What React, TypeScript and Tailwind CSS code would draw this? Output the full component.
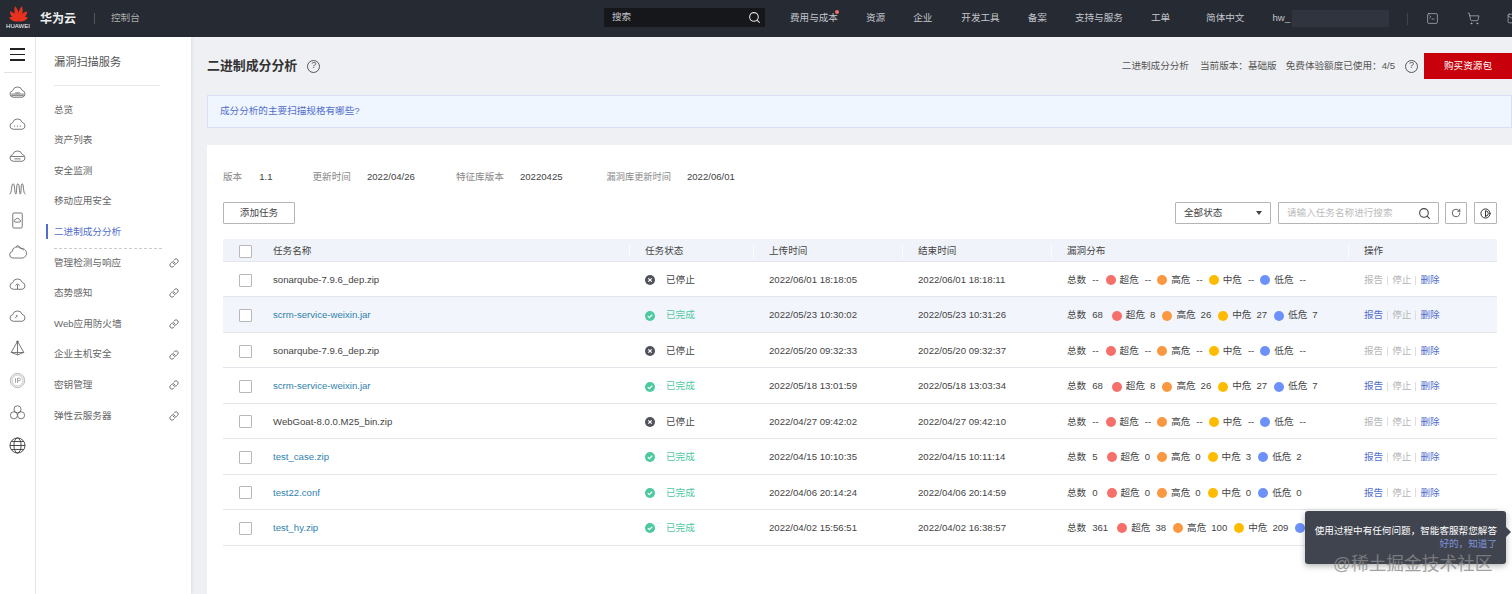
import { ReactNode } from "react";
import { Contrast, Link, Mail, RotateCw, Search, ShoppingCart, SquareTerminal } from "lucide-react";

interface Task {
  name: string;
  done: boolean;
  start: string;
  end: string;
  counts: string[];
}

const tasks: Task[] = [
  { name: "sonarqube-7.9.6_dep.zip", done: false, start: "2022/06/01 18:18:05", end: "2022/06/01 18:18:11", counts: ["--", "--", "--", "--", "--"] },
  { name: "scrm-service-weixin.jar", done: true, start: "2022/05/23 10:30:02", end: "2022/05/23 10:31:26", counts: ["68", "8", "26", "27", "7"] },
  { name: "sonarqube-7.9.6_dep.zip", done: false, start: "2022/05/20 09:32:33", end: "2022/05/20 09:32:37", counts: ["--", "--", "--", "--", "--"] },
  { name: "scrm-service-weixin.jar", done: true, start: "2022/05/18 13:01:59", end: "2022/05/18 13:03:34", counts: ["68", "8", "26", "27", "7"] },
  { name: "WebGoat-8.0.0.M25_bin.zip", done: false, start: "2022/04/27 09:42:02", end: "2022/04/27 09:42:10", counts: ["--", "--", "--", "--", "--"] },
  { name: "test_case.zip", done: true, start: "2022/04/15 10:10:35", end: "2022/04/15 10:11:14", counts: ["5", "0", "0", "3", "2"] },
  { name: "test22.conf", done: true, start: "2022/04/06 20:14:24", end: "2022/04/06 20:14:59", counts: ["0", "0", "0", "0", "0"] },
  { name: "test_hy.zip", done: true, start: "2022/04/02 15:56:51", end: "2022/04/02 16:38:57", counts: ["361", "38", "100", "209", ""] },
];

const levels = [
  { label: "超危", dot: "bg-[#f66f6a]" },
  { label: "高危", dot: "bg-[#fa9841]" },
  { label: "中危", dot: "bg-[#ffbb00]" },
  { label: "低危", dot: "bg-[#6c92fa]" },
];

const gridCols = "grid grid-cols-[50px_372px_124px_149px_149px_297px_133px] items-center pt-[2px]";
const headSep = "relative before:absolute before:-left-[16px] before:top-0 before:w-px before:h-[14px] before:bg-white/70";
const cloud = "M6.5 18a4.2 4.2 0 0 1-.6-8.3A6.3 6.3 0 0 1 18 9.4 4.4 4.4 0 0 1 18 18z";

function RailIcon({ children }: { children: ReactNode }) {
  return (
    <svg viewBox="0 0 24 24" fill="none" stroke="#666" strokeWidth="1.1" className="w-[19px] h-[19px]">
      {children}
    </svg>
  );
}

const railIcons: ReactNode[] = [
  <><path d={cloud} /><path d="M4 14h16M4 16h16M9 12.5h6" /></>,
  <><path d={cloud} /><path d="M8 14h1M11.5 14h1M15 14h1" strokeWidth="1.4" /></>,
  <><path d={cloud} /><path d="M4 12h16M8 15h8" /></>,
  <path d="M2 19c3 0 2-13 4.5-13S8 19 10 19c1.5 0 0-13 2.5-13S14 19 15.5 19 16 6 18 6s1 13 4 13" />,
  <><rect x="6" y="2.5" width="12" height="19" rx="1.5" /><path d="M9 14a1.5 1.5 0 0 1 .5-3 2.6 2.6 0 0 1 5 .2 1.4 1.4 0 0 1 0 2.8z" /></>,
  <><path d="M6 19a4.2 4.2 0 0 1-.6-8.3A6 6 0 0 1 16 7a4.7 4.7 0 0 1 2.5 12z" /><path d="M10 5l2-2 8 6" /></>,
  <><path d={cloud} /><path d="M12 18v-6M9.5 13.5 12 11l2.5 2.5" /></>,
  <><path d={cloud} /><path d="M9 14l3-3M12 11h-2" /></>,
  <><path d="M12 3 4 17l8 3 8-3zM12 3v17M4 17h16" /><circle cx="12" cy="3.5" r="1" fill="#555" /></>,
  <><circle cx="12" cy="12" r="9" stroke="#aaa" /><circle cx="12" cy="12" r="7" stroke="#bbb" /><path d="M9.5 9v6M12 15V9h2a1.5 1.5 0 0 1 0 3.5h-2" stroke="#999" /></>,
  <><circle cx="12" cy="8" r="4.5" /><circle cx="7.5" cy="15.5" r="4.5" /><circle cx="16.5" cy="15.5" r="4.5" /></>,
  <><circle cx="12" cy="12" r="9.5" stroke="#333" /><ellipse cx="12" cy="12" rx="4.5" ry="9.5" stroke="#333" /><path d="M2.5 12h19M4 7h16M4 17h16" stroke="#333" /></>,
];

const sideItems = ["总览", "资产列表", "安全监测", "移动应用安全", "二进制成分分析", "管理检测与响应", "态势感知", "Web应用防火墙", "企业主机安全", "密钥管理", "弹性云服务器"];

const petals = [
  { angle: -68, d: "M12 18C9.5 15 9 10 12 6.5 15 10 14.5 15 12 18z" },
  { angle: 68, d: "M12 18C9.5 15 9 10 12 6.5 15 10 14.5 15 12 18z" },
  { angle: -41, d: "M12 18C8.8 13 8.8 7 12 3 15.2 7 15.2 13 12 18z" },
  { angle: 41, d: "M12 18C8.8 13 8.8 7 12 3 15.2 7 15.2 13 12 18z" },
  { angle: -13, d: "M12 18C9 12 9 5 12 0.5 15 5 15 12 12 18z" },
  { angle: 13, d: "M12 18C9 12 9 5 12 0.5 15 5 15 12 12 18z" },
];

function HuaweiLogo() {
  return (
    <div className="w-[22px] ml-[7px] -mt-[4px] flex flex-col items-center">
      <svg viewBox="0 0 24 18.5" className="w-[21px] h-[17px]" fill="#e8321f">
        {petals.map((petal) => (
          <path key={petal.angle} d={petal.d} transform={`rotate(${petal.angle} 12 18)`} />
        ))}
      </svg>
      <span className="text-[6px] leading-[6px] text-white mt-[1px]">HUAWEI</span>
    </div>
  );
}

function StatusIcon({ done }: { done: boolean }) {
  return (
    <svg viewBox="0 0 10 10" className="w-[10px] h-[10px] shrink-0">
      <circle cx="5" cy="5" r="5" fill={done ? "#4dc9a0" : "#50535c"} />
      {done ? (
        <path d="M2.8 5.1 4.4 6.7 7.3 3.7" stroke="#fff" strokeWidth="1.2" fill="none" />
      ) : (
        <path d="M3.3 3.3 6.7 6.7M6.7 3.3 3.3 6.7" stroke="#fff" strokeWidth="1.2" fill="none" />
      )}
    </svg>
  );
}

function Checkbox() {
  return <div className="w-[13px] h-[13px] ml-[16px] border border-[#b8b8b8] rounded-[1px] bg-white" />;
}

// the last row runs under the tip, so its 低危 text and links are not drawn
function TaskRow({ task, highlighted, covered }: { task: Task; highlighted: boolean; covered: boolean }) {
  const empty = task.counts[0] === "--";
  return (
    <div className={`${gridCols} h-[35.45px] border-b border-[#e3e5ea] ${highlighted ? "bg-[#f2f5fb]" : "bg-white"} text-[#444]`}>
      <Checkbox />
      <div className={task.done ? "text-[#2f82b0]" : "text-[#444]"}>{task.name}</div>
      <div className="flex items-center gap-[11px]">
        <StatusIcon done={task.done} />
        <span className={task.done ? "text-[#4dc9a0]" : "text-[#444]"}>{task.done ? "已完成" : "已停止"}</span>
      </div>
      <div>{task.start}</div>
      <div>{task.end}</div>
      <div className="flex items-center whitespace-nowrap">
        <span>总数</span>
        <span className="ml-[6px]">{task.counts[0]}</span>
        {levels.map((level, i) => {
          const gap = empty ? (i === 0 ? "ml-[7px]" : "ml-[6px]") : i === 0 ? "ml-[9px]" : "ml-[7px]";
          return (
            <div key={level.label} className={`flex items-center ${gap}`}>
              <span className={`w-[10px] h-[10px] rounded-full ${level.dot}`} />
              {!(covered && i === 3) && <span className="ml-[4px]">{level.label}</span>}
              {!(covered && i === 3) && <span className={empty ? "ml-[6px]" : "ml-[5px]"}>{task.counts[i + 1]}</span>}
            </div>
          );
        })}
      </div>
      {!covered && (
        <div className="flex items-center">
          <span className={task.done ? "text-[#526ecc]" : "text-[#b5b5b5]"}>报告</span>
          <span className="mx-[4px] w-px h-[9px] bg-[#ddd]" />
          <span className="text-[#b5b5b5]">停止</span>
          <span className="mx-[4px] w-px h-[9px] bg-[#ddd]" />
          <span className="text-[#526ecc]">删除</span>
        </div>
      )}
    </div>
  );
}

export default function App() {
  return (
    <div className="relative h-screen overflow-hidden flex flex-col bg-[#eff0f3] text-[9.6px] [font-family:'Liberation_Sans','Noto_Sans_CJK_SC',sans-serif]">
      {/* Top bar */}
      <header className="h-[37px] shrink-0 bg-[#262a33] flex items-center text-[#c4c6cc]">
        <div className="w-[604px] shrink-0 flex items-center">
          <HuaweiLogo />
          <span className="ml-[11px] text-[12px] font-bold text-[#eee]">华为云</span>
          <span className="ml-[18px] w-px h-[11px] bg-[#555]" />
          <span className="ml-[16px] text-[#aaa]">控制台</span>
        </div>
        <div className="w-[161px] h-[19px] -mt-[3px] bg-[#16171b] rounded-[1px] flex items-center justify-between pl-[8px] pr-[4px] shrink-0">
          <span>搜索</span>
          <Search size={13} className="text-[#ddd]" />
        </div>
        <nav className="ml-[25px] flex items-center gap-[28px] shrink-0 -mt-[1px] whitespace-nowrap">
          <span className="relative">
            费用与成本
            <span className="absolute -right-[1px] top-[-1px] w-[4px] h-[4px] rounded-full bg-[#f66f6a]" />
          </span>
          <span>资源</span>
          <span>企业</span>
          <span className="ml-[1px]">开发工具</span>
          <span>备案</span>
          <span>支持与服务</span>
          <span>工单</span>
          <span className="ml-[8px]">简体中文</span>
          <span className="flex items-center">
            hw_
            <span className="ml-[2px] w-[97px] h-[17px] bg-[#30343e] rounded-[1px]" />
          </span>
        </nav>
        <span className="ml-[18px] w-px h-[12px] bg-[#444] shrink-0" />
        <SquareTerminal size={13} strokeWidth={1.2} className="ml-[18px] shrink-0" />
        <ShoppingCart size={13} strokeWidth={1.2} className="ml-[28px] shrink-0" />
        <Mail size={13} strokeWidth={1.2} className="ml-[27px] shrink-0" />
      </header>

      <div className="flex-1 flex min-h-0">
        {/* Icon rail */}
        <aside className="w-[36px] shrink-0 bg-white border-r border-[#e8e9ec] flex flex-col items-center">
          <div className="mt-[11px] w-[15px] flex flex-col gap-[4px]">
            <span className="h-[1.5px] bg-[#222]" />
            <span className="h-[1.5px] bg-[#222]" />
            <span className="h-[1.5px] bg-[#222]" />
          </div>
          <div className="mt-[11px] w-[28px] h-px bg-[#e2e2e2]" />
          <div className="mt-[10px] flex flex-col gap-[13.1px]">
            {railIcons.map((icon, i) => (
              <RailIcon key={i}>{icon}</RailIcon>
            ))}
          </div>
        </aside>

        {/* Service menu */}
        <aside className="w-[155px] shrink-0 bg-white pl-[18px] shadow-[1px_0_3px_rgba(0,0,0,0.08)]">
          <div className="mt-[18px] text-[11.2px] leading-[14px] text-[#555]">漏洞扫描服务</div>
          <div className="mt-[16px] w-[106px] h-px bg-[#e8e9ee]" />
          <ul className="mt-[8.6px] text-[#666] text-[9.6px]">
            {sideItems.map((item, i) => (
              <li key={item} className={`relative h-[30.6px] flex items-center ${i === 4 ? "text-[#526ecc]" : ""}`}>
                {i === 4 && <span className="absolute -left-[8px] top-[7px] w-[2px] h-[15px] bg-[#526ecc]" />}
                {i === 4 && <span className="absolute left-0 bottom-[-1px] w-[108px] border-b border-dashed border-[#ccc]" />}
                <span>{item}</span>
                {i > 4 && <Link size={10} className="absolute left-[115px] text-[#555]" />}
              </li>
            ))}
          </ul>
        </aside>

        {/* Main */}
        <main className="flex-1 min-w-0 pl-[16px] flex flex-col">
          <div className="h-[58px] shrink-0 flex items-center">
            <h1 className="text-[12.9px] font-bold text-[#333] leading-none">二进制成分分析</h1>
            <span className="ml-[10px] w-[13px] h-[13px] rounded-full border border-[#555] text-[#555] text-[9px] flex items-center justify-center">?</span>
            <div className="ml-auto flex items-center text-[#555]">
              <span>二进制成分分析</span>
              <span className="ml-[11px]">当前版本：基础版</span>
              <span className="ml-[9px]">免费体验额度已使用：4/5</span>
              <span className="ml-[10px] w-[13px] h-[13px] rounded-full border border-[#555] text-[9px] flex items-center justify-center">?</span>
              <button className="ml-[6px] w-[88px] h-[26px] bg-[#c7000b] text-white text-[9.6px]">购买资源包</button>
            </div>
          </div>

          <div className="h-[33px] shrink-0 bg-[#f0f6ff] border border-[#d9dff5] flex items-center pl-[12px] text-[#526ecc]">
            成分分析的主要扫描规格有哪些?
          </div>

          <section className="mt-[17px] flex-1 bg-white pl-[16px] pr-[15px] min-h-0">
            <div className="mt-[26px] h-[13px] flex items-center text-[#888]">
              <span>版本</span>
              <span className="ml-[17px] text-[#444]">1.1</span>
              <span className="ml-[40px]">更新时间</span>
              <span className="ml-[16px] text-[#444]">2022/04/26</span>
              <span className="ml-[41px]">特征库版本</span>
              <span className="ml-[16px] text-[#444]">20220425</span>
              <span className="ml-[44px] text-[9.2px]">漏洞库更新时间</span>
              <span className="ml-[16px] text-[#444]">2022/06/01</span>
            </div>

            <div className="mt-[18px] flex items-center text-[#444]">
              <button className="w-[72px] h-[22px] border border-[#b5b5b5] rounded-[1px] bg-white text-[9.6px] text-[#444]">添加任务</button>
              <div className="ml-auto w-[96px] h-[22px] border border-[#b5b5b5] rounded-[1px] flex items-center justify-between pl-[8px] pr-[8px]">
                <span>全部状态</span>
                <span className="w-0 h-0 border-x-[3px] border-x-transparent border-t-[4px] border-t-[#444]" />
              </div>
              <div className="ml-[7px] w-[161px] h-[22px] border border-[#b5b5b5] rounded-[1px] flex items-center justify-between pl-[8px] pr-[7px] text-[#bbb]">
                <span>请输入任务名称进行搜索</span>
                <Search size={13} className="text-[#444]" />
              </div>
              <div className="ml-[6px] w-[22px] h-[22px] border border-[#b5b5b5] rounded-[1px] flex items-center justify-center">
                <RotateCw size={10} />
              </div>
              <div className="ml-[7px] w-[23px] h-[22px] border border-[#b5b5b5] rounded-[1px] flex items-center justify-center">
                <Contrast size={11} className="text-[#222]" />
              </div>
            </div>

            <div className={`${gridCols} mt-[15px] h-[23px] bg-[#f0f3f9] border-b border-[#e3e5ea] text-[#444]`}>
              <Checkbox />
              <div>任务名称</div>
              <div className={headSep}>任务状态</div>
              <div className={headSep}>上传时间</div>
              <div className={headSep}>结束时间</div>
              <div className={headSep}>漏洞分布</div>
              <div className={headSep}>操作</div>
            </div>
            {tasks.map((task, i) => (
              <TaskRow key={task.start} task={task} highlighted={i === 1} covered={i === tasks.length - 1} />
            ))}
          </section>
        </main>
      </div>

      {/* Smart-service tip */}
      <div className="absolute left-[1305px] top-[511px] w-[201px] h-[53px] bg-[#40444f] rounded-[3px] shadow-[0_2px_6px_rgba(0,0,0,0.3)] pr-[9px] pt-[13px] text-right leading-[13px]">
        <div className="text-white">使用过程中有任何问题，智能客服帮您解答</div>
        <div className="text-[#7f93dc]">好的，知道了</div>
        <span className="absolute -right-[5px] top-[16px] w-0 h-0 border-y-[5px] border-y-transparent border-l-[5px] border-l-[#40444f]" />
      </div>

      {/* Watermark */}
      <div className="absolute left-[1333px] top-[552px] text-[17.7px] leading-[24px] text-[#8a8a8a]/80 whitespace-nowrap">@稀土掘金技术社区</div>
    </div>
  );
}
